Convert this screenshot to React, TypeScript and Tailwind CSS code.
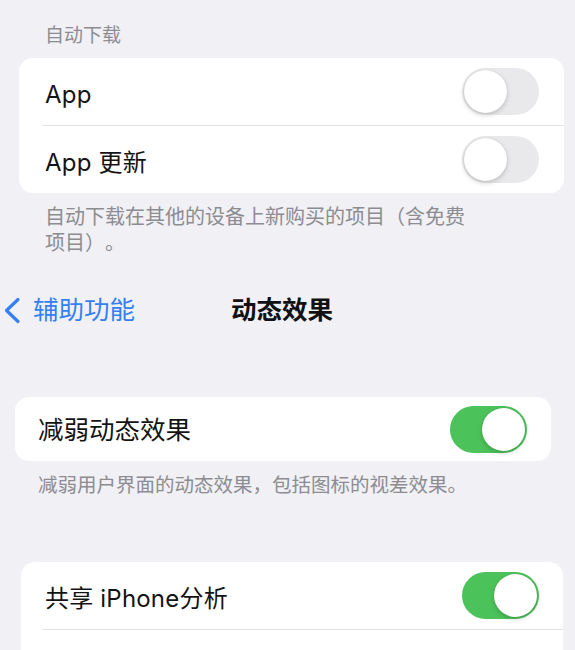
import React from 'react'

const FONT = "font-['Inter','Noto_Sans_CJK_SC',sans-serif]"

function Toggle({ on }: { on: boolean }) {
  return (
    <div
      className={`w-[77px] h-[47px] rounded-full p-[2px] flex shrink-0 ${
        on ? 'bg-[#4cc25a] justify-end' : 'bg-[#e9e9eb] justify-start'
      }`}
    >
      <div className="w-[43px] h-[43px] rounded-full bg-white shadow-[0_2px_5px_rgba(0,0,0,0.18),0_0_1px_rgba(0,0,0,0.15)]" />
    </div>
  )
}

function Row({ label, on, pl, pr }: { label: string; on: boolean; pl: string; pr: string }) {
  return (
    <div className={`h-[67px] flex items-center justify-between ${pl} ${pr}`}>
      <span className="translate-y-[3px] text-[24px] text-[#141414] tracking-[0.2px]">{label}</span>
      <Toggle on={on} />
    </div>
  )
}

export default function App() {
  return (
    <div className={`w-[575px] h-[650px] overflow-hidden bg-[#f0f0f5] [text-spacing-trim:space-all] ${FONT}`}>
      {/* 自动下载 */}
      <div className="pt-[26px] pl-[45px] text-[19px] leading-[20px] text-[#8c8c91]">自动下载</div>
      <div className="mt-[12px] ml-[19px] w-[545px] rounded-[14px] bg-white">
        <Row label="App" on={false} pl="pl-[26px]" pr="pr-[25px]" />
        <div className="ml-[24px] h-px bg-[#e2e2e5]" />
        <Row label="App 更新" on={false} pl="pl-[26px]" pr="pr-[25px]" />
      </div>
      <p className="mt-[11px] ml-[45px] w-[430px] text-[20px] leading-[26px] text-[#8c8c91]">
        自动下载在其他的设备上新购买的项目（含免费项目）。
      </p>

      {/* nav bar */}
      <div className="mt-[32px] h-[44px] flex items-center">
        <svg width="18" height="27" viewBox="0 0 18 27" className="ml-[3px]">
          <path d="M15 2.5 L3.5 13.5 L15 24.5" fill="none" stroke="#3480f2" strokeWidth="3.2" strokeLinecap="round" strokeLinejoin="round" />
        </svg>
        <span className="ml-[12px] text-[25.5px] text-[#3480f2]">辅助功能</span>
        <span className="ml-[96px] text-[25.5px] font-bold text-[#111]">动态效果</span>
      </div>

      {/* 减弱动态效果 */}
      <div className="mt-[65px] ml-[15px] w-[536px] h-[64px] rounded-[14px] bg-white flex items-center justify-between pl-[23px] pr-[24px]">
        <span className="translate-y-[1px] text-[25.5px] text-[#141414]">减弱动态效果</span>
        <Toggle on />
      </div>
      <p className="mt-[11px] ml-[38px] text-[19.5px] leading-[26px] text-[#8c8c91]">
        减弱用户界面的动态效果，包括图标的视差效果。
      </p>

      {/* 共享 iPhone 分析 */}
      <div className="mt-[64px] ml-[21px] w-[542px] h-[200px] rounded-t-[14px] bg-white">
        <Row label="共享 iPhone分析" on pl="pl-[24px]" pr="pr-[24px]" />
        <div className="ml-[22px] h-px bg-[#e2e2e5]" />
      </div>
    </div>
  )
}
